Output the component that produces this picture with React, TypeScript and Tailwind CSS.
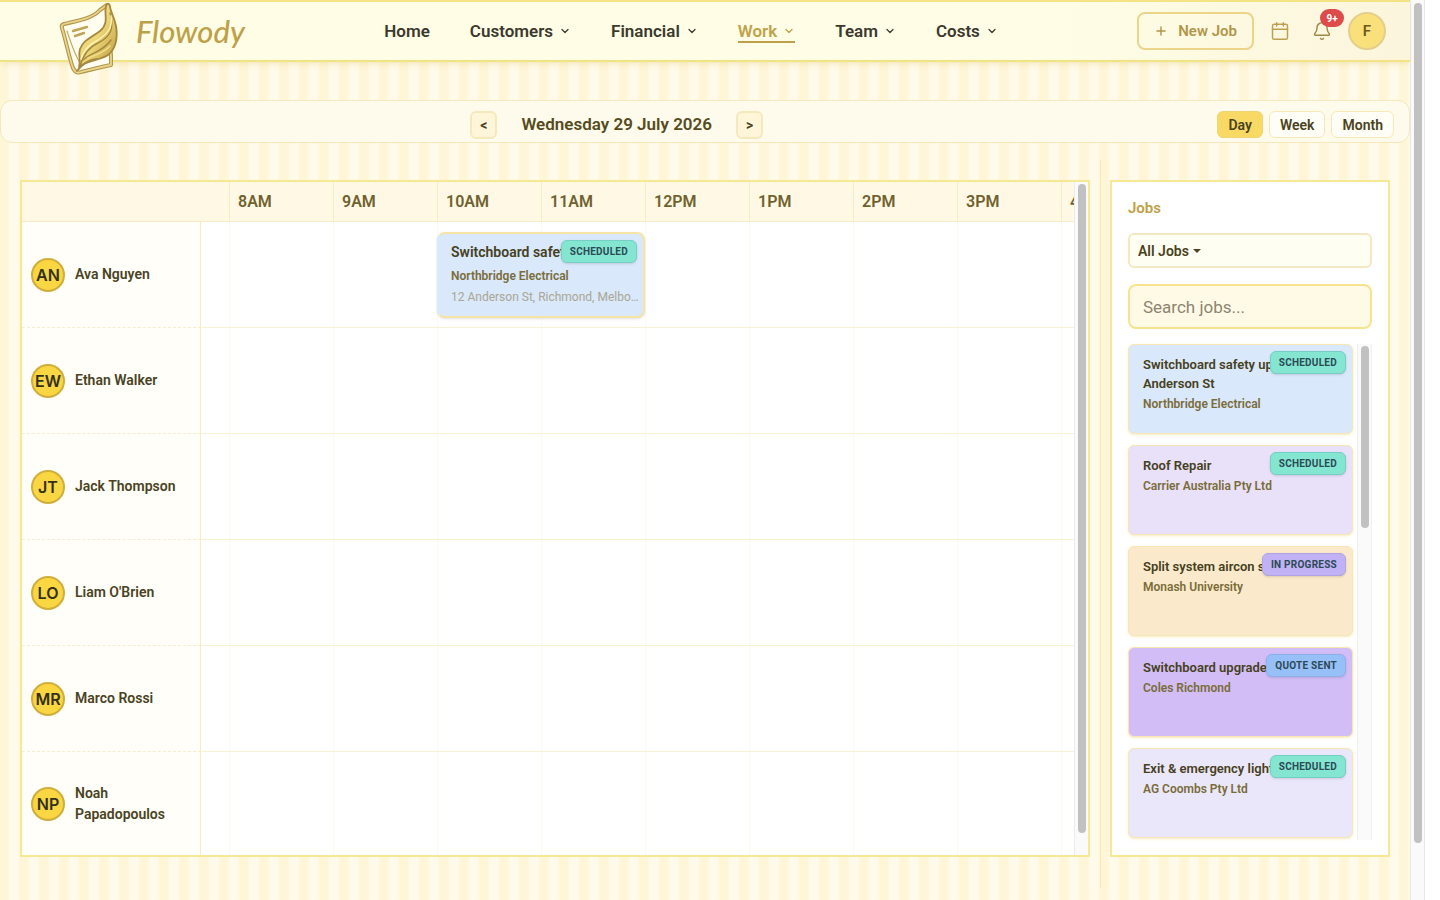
import React, { useState } from "react";
import { Bell, Calendar, ChevronDown, Plus } from "lucide-react";

const HOUR_WIDTH = 104;
const GUTTER_WIDTH = 207;
const FIRST_HOUR = 8;

const navItems = [
  { label: "Home", menu: false },
  { label: "Customers", menu: true },
  { label: "Financial", menu: true },
  { label: "Work", menu: true, active: true },
  { label: "Team", menu: true },
  { label: "Costs", menu: true },
];

const hours = ["8AM", "9AM", "10AM", "11AM", "12PM", "1PM", "2PM", "3PM", "4PM"];

const staff = [
  { initials: "AN", name: "Ava Nguyen" },
  { initials: "EW", name: "Ethan Walker" },
  { initials: "JT", name: "Jack Thompson" },
  { initials: "LO", name: "Liam O'Brien" },
  { initials: "MR", name: "Marco Rossi" },
  { initials: "NP", name: "Noah Papadopoulos" },
];

const bookings = [
  {
    staff: "AN",
    start: 10,
    end: 12,
    title: "Switchboard safety upgrade",
    customer: "Northbridge Electrical",
    address: "12 Anderson St, Richmond, Melbourne VIC",
    status: "SCHEDULED",
  },
];

const jobs = [
  { title: "Switchboard safety upgrade – Anderson St", customer: "Northbridge Electrical", status: "SCHEDULED", color: "bg-[#dae8fc]" },
  { title: "Roof Repair", customer: "Carrier Australia Pty Ltd", status: "SCHEDULED", color: "bg-[#e9e0fa]" },
  { title: "Split system aircon service", customer: "Monash University", status: "IN PROGRESS", color: "bg-[#faeacb]" },
  { title: "Switchboard upgrade", customer: "Coles Richmond", status: "QUOTE SENT", color: "bg-[#d2bdf6]" },
  { title: "Exit & emergency lighting", customer: "AG Coombs Pty Ltd", status: "SCHEDULED", color: "bg-[#ebe7fb]" },
];

const statusStyles: Record<string, string> = {
  SCHEDULED: "bg-[#84e6d1] border-[#74cfc4]",
  "IN PROGRESS": "bg-[#c1b2f6] border-[#b3a3e6]",
  "QUOTE SENT": "bg-[#98c0f8] border-[#8db0ea]",
};

function StatusBadge({ status }: { status: string }) {
  return (
    <span
      className={`absolute right-1.5 top-1.5 flex h-[23px] items-center rounded-md border px-2 text-[10px] font-bold tracking-wide text-[#2c4a55] shadow-sm ${statusStyles[status]}`}
    >
      {status}
    </span>
  );
}

function Logo() {
  return (
    <svg viewBox="0 0 80 80" className="h-20 w-20 shrink-0" fill="none" strokeLinejoin="round" strokeLinecap="round">
      <defs>
        <linearGradient id="leaf" x1="0" y1="0" x2="1" y2="1">
          <stop offset="0" stopColor="#f3e092" />
          <stop offset="0.5" stopColor="#ecd676" />
          <stop offset="1" stopColor="#b8973c" />
        </linearGradient>
      </defs>
      {/* sheet of paper */}
      <path
        d="M14 25 C26 22 42 20 50 11 L57 6 L61 57 L61 66 C50 68 40 71 31 73 Q26 75 23 69 C19 58 16 42 12 29 Q11 26 14 25 Z"
        fill="#fffdf0"
        stroke="#b0954a"
        strokeWidth="4"
      />
      <path
        d="M14 25 C26 22 42 20 50 11 L57 6 L61 57 L61 66 C50 68 40 71 31 73 Q26 75 23 69 C19 58 16 42 12 29 Q11 26 14 25 Z"
        stroke="#ead48a"
        strokeWidth="1.8"
      />
      <path d="M17 32 C21 44 24 54 30 64" stroke="#c3a75a" strokeWidth="1.2" />
      <path d="M23 32 L37 28 M25 37 L34 34" stroke="#c0a456" strokeWidth="2.4" />
      {/* leaf */}
      <path
        d="M57 5 C52 12 61 23 50 32 C42 38 33 41 30 50 C28 56 31 61 29 68 C36 61 49 62 58 56 C66 50 68 38 66 27 C64 17 60 12 60 7 Q59 4 57 5 Z"
        fill="url(#leaf)"
        stroke="#a58840"
        strokeWidth="1.8"
      />
      <path d="M60 14 C65 30 60 38 48 44 C39 48 33 56 30 67" stroke="#a58840" strokeWidth="1.4" />
      <path d="M61 17 C63 29 57 35 48 41 C38 46 33 53 31 60" stroke="#fff3b8" strokeWidth="1.4" />
      <path d="M33 61 C40 54 53 53 61 41" stroke="#a58840" strokeWidth="1.4" />
      <path d="M38 59 C46 56 54 54 60 47" stroke="#f3dc8a" strokeWidth="1.4" />
      <path d="M27 72 C33 64 39 61 47 60" stroke="#a58840" strokeWidth="1.8" />
    </svg>
  );
}

export default function App() {
  const [view, setView] = useState("Day");
  const [search, setSearch] = useState("");

  return (
    <div className="flex min-h-screen bg-white font-[Roboto,sans-serif] text-[#4a4220]">
      <div className="flex min-w-0 flex-1 flex-col bg-[repeating-linear-gradient(90deg,#fef6d7_0px,#fef6d7_7px,#fffaea_10px,#fffaea_18px,#fef6d7_20px)]">
        {/* Top bar */}
        <header className="z-10 flex h-[62px] items-center justify-between border-y-2 border-[#f4e384] bg-linear-to-r from-[#fffde6] from-75% to-[#fbf5dc] pl-[50px] pr-6 shadow-md shadow-[#e8d58a]/30">
          <a href="#" className="flex items-center gap-1.5">
            <span className="-my-2 pt-4">
              <Logo />
            </span>
            <span className="font-[Lato,sans-serif] text-[31px] font-medium italic leading-none text-[#bda149]">Flowody</span>
          </a>

          <nav className="flex items-center gap-10">
            {navItems.map((item) => (
              <a
                key={item.label}
                href="#"
                className={`flex items-center gap-1.5 border-y-2 border-t-transparent text-[17px] font-semibold leading-5 ${
                  item.active ? "border-b-[#bda149] text-[#c0a24a]" : "border-b-transparent text-[#3b392e]"
                }`}
              >
                {item.label}
                {item.menu && <ChevronDown size={12} strokeWidth={2.5} />}
              </a>
            ))}
          </nav>

          <div className="flex items-center">
            <button className="flex h-[38px] items-center gap-2.5 rounded-lg border-2 border-[#ecd489] px-[15px] text-[15px] font-semibold text-[#b3964a]">
              <Plus size={14} strokeWidth={2.5} />
              New Job
            </button>
            <button aria-label="Calendar" className="ml-4 text-[#bf9f52]">
              <Calendar size={20} strokeWidth={1.75} />
            </button>
            <button aria-label="Notifications" className="relative ml-[22px] text-[#a08a45]">
              <Bell size={20} strokeWidth={1.75} />
              <span className="absolute -right-3 -top-3 flex h-[18px] w-6 items-center justify-center rounded-full bg-[#dd4b4b] text-[10px] font-bold text-white">
                9+
              </span>
            </button>
            <button className="ml-4 flex size-[38px] items-center justify-center rounded-full border-2 border-[#e3cf8a] bg-[#fae07a] text-[15px] font-semibold text-[#6b5a1e]">
              F
            </button>
          </div>
        </header>

        {/* Date bar */}
        <div className="mt-[38px] flex h-[43px] items-center rounded-xl border border-[#f6e8bb] bg-[#fffbec] px-[15px] pt-1.5">
          <div className="flex flex-1 items-center justify-center gap-6">
            <button className="h-7 w-[27px] rounded-md border-2 border-[#f7e8bb] bg-[#fff6d9] text-sm font-bold leading-none">&lt;</button>
            <h1 className="text-[17px] font-semibold text-[#554b20]">Wednesday 29 July 2026</h1>
            <button className="h-7 w-[27px] rounded-md border-2 border-[#f7e8bb] bg-[#fff6d9] text-sm font-bold leading-none">&gt;</button>
          </div>
          <div className="flex gap-1.5">
            {["Day", "Week", "Month"].map((v) => (
              <button
                key={v}
                onClick={() => setView(v)}
                className={`h-[27px] rounded-md border px-2.5 text-sm font-semibold ${
                  view === v ? "border-[#f0d472] bg-[#f8d964]" : "border-[#f7e8b5] bg-[#fffef6]"
                }`}
              >
                {v}
              </button>
            ))}
          </div>
        </div>

        <main className="mt-[17px] flex flex-1 px-5 pb-3">
          {/* Schedule */}
          <section className="mb-[31px] mt-5 flex min-w-0 flex-1 border-2 border-[#f8e893] bg-white">
            <div className="flex min-w-0 flex-1 flex-col overflow-hidden">
              <div className="flex h-10 shrink-0 border-b border-[#f8ecc8] bg-[#fef8e5]">
                <div className="w-[207px] shrink-0" />
                {hours.map((hour) => (
                  <div
                    key={hour}
                    className="flex w-[104px] shrink-0 items-center border-l border-[#f8ecc8] pl-2 text-base font-semibold text-[#70622f]"
                  >
                    {hour}
                  </div>
                ))}
              </div>

              {staff.map((person) => (
                <div key={person.initials} className="group relative flex h-[106px] last:h-auto last:flex-1">
                  <div className="flex w-[179px] shrink-0 items-center gap-2.5 border-b border-r border-b-[#f5edcf] border-r-[#f9edbd] bg-[#fffef9] pl-[9px] pr-3 [border-bottom-style:dashed] group-last:border-b-0">
                    <span className="flex size-[34px] shrink-0 items-center justify-center rounded-full border-2 border-[#d0ae3c] bg-[#fad643] font-[Inter,sans-serif] text-base font-semibold text-[#333019]">
                      {person.initials}
                    </span>
                    <span className="text-[14px] font-semibold leading-[21px] text-[#4a431f]">{person.name}</span>
                  </div>
                  <div className="w-7 shrink-0 border-b border-[#f9f1d3] group-last:border-b-0" />
                  {hours.map((hour) => (
                    <div
                      key={hour}
                      className="w-[104px] shrink-0 border-b border-l border-b-[#f9f1d3] border-l-[#fcf9ee] group-last:border-b-0"
                    />
                  ))}

                  {bookings
                    .filter((b) => b.staff === person.initials)
                    .map((b) => (
                      <article
                        key={b.title}
                        className="absolute bottom-2.5 top-2.5 rounded-lg border-2 border-[#f5e4a4] border-l-[#dae8fc] bg-[#dae8fc] py-2 pl-3 pr-1 shadow-sm"
                        style={{
                          left: GUTTER_WIDTH + (b.start - FIRST_HOUR) * HOUR_WIDTH,
                          width: (b.end - b.start) * HOUR_WIDTH,
                        }}
                      >
                        <h3 className="truncate text-[14px] font-semibold leading-5 text-[#454020]">{b.title}</h3>
                        <p className="mt-1 truncate text-xs font-semibold leading-5 text-[#796c38]">{b.customer}</p>
                        <p className="truncate text-xs leading-[22px] text-[#a9a691]">{b.address}</p>
                        <StatusBadge status={b.status} />
                      </article>
                    ))}
                </div>
              ))}
            </div>
            <div className="flex w-3.5 shrink-0 justify-center border-l border-[#ececec] bg-[#fafafa] py-0.5">
              <div className="h-[97%] w-2 rounded-full bg-[#c1c1c1]" />
            </div>
          </section>

          <div className="ml-2.5 mr-[9px] w-px shrink-0 bg-[#f9ebb0]" />

          {/* Jobs panel */}
          <aside className="mb-[31px] mt-5 flex w-[280px] shrink-0 flex-col border-2 border-[#f8e893] bg-white p-4 pb-[15px]">
            <h2 className="text-[15px] font-semibold leading-5 text-[#bfa045]">Jobs</h2>

            <div className="mt-[15px] flex h-[35px] items-center gap-1 rounded-md border-2 border-[#f4e8c0] bg-[#fffef2] px-2">
              <select aria-label="Filter jobs" className="appearance-none bg-transparent text-sm font-semibold outline-none [field-sizing:content]">
                <option>All Jobs</option>
              </select>
              <svg viewBox="0 0 8 4" className="h-1 w-2">
                <path d="M0 0h8L4 4z" fill="#4a4220" />
              </svg>
            </div>

            <input
              type="text"
              aria-label="Search jobs"
              placeholder="Search jobs..."
              value={search}
              onChange={(e) => setSearch(e.target.value)}
              className="mt-4 h-[45px] w-full rounded-lg border-2 border-[#f6e48c] bg-[#fffae6] px-[13px] text-[17px] outline-none placeholder:text-[#8b8570]"
            />

            <div className="mt-[15px] flex flex-1 justify-between">
              <ul className="flex w-[225px] flex-col gap-[11px]">
                {jobs.map((job) => (
                  <li
                    key={job.title}
                    className={`relative h-[90px] rounded-md border border-[#f8e6b4] px-3.5 py-2.5 shadow-sm shadow-[#f3e3a0]/50 ${job.color}`}
                  >
                    <h3 className="text-[13px] font-semibold leading-[19px] text-[#454020]">{job.title}</h3>
                    <p className="mt-px text-xs font-semibold leading-[21px] text-[#796c38]">{job.customer}</p>
                    <StatusBadge status={job.status} />
                  </li>
                ))}
              </ul>
              <div className="flex w-[15px] justify-center border-x border-[#f0f0f0] bg-[#fafafa] py-0.5">
                <div className="h-[37%] w-2 rounded-full bg-[#c1c1c1]" />
              </div>
            </div>
          </aside>
        </main>
      </div>

      {/* Page scroll track */}
      <div className="mr-[15px] flex w-[15px] shrink-0 justify-center border-x border-[#e8e8e8] bg-[#fafafa] py-[3px]">
        <div className="h-[94%] w-2 rounded-full bg-[#c1c1c1]" />
      </div>
    </div>
  );
}
